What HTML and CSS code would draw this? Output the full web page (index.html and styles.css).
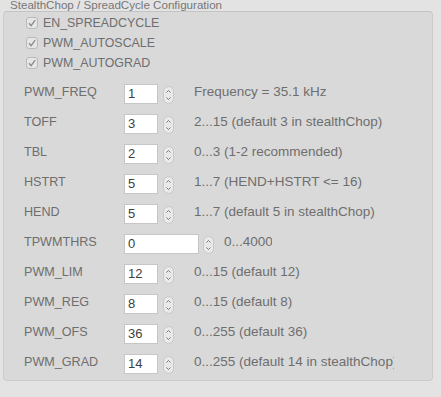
FILE: index.html
```html
<!DOCTYPE html><html>
<head>
  <meta http-equiv="Content-Type" content="text/html;charset=UTF-8">
  <title>StealthChop / SpreadCycle Configuration</title>
  <link rel="stylesheet" href="styles.css">
</head>
<body>
  <div class="title">StealthChop / SpreadCycle Configuration</div>
  <div class="group">
    <div class="checks">
      <label class="check"><span class="box"><svg width="10" height="10" viewBox="0 0 10 10"><path d="M2 5.2 L4.1 7.6 L8.2 2.2" fill="none" stroke="#8a8a8a" stroke-width="1.3"/></svg></span>EN_SPREADCYCLE</label>
      <label class="check"><span class="box"><svg width="10" height="10" viewBox="0 0 10 10"><path d="M2 5.2 L4.1 7.6 L8.2 2.2" fill="none" stroke="#8a8a8a" stroke-width="1.3"/></svg></span>PWM_AUTOSCALE</label>
      <label class="check"><span class="box"><svg width="10" height="10" viewBox="0 0 10 10"><path d="M2 5.2 L4.1 7.6 L8.2 2.2" fill="none" stroke="#8a8a8a" stroke-width="1.3"/></svg></span>PWM_AUTOGRAD</label>
    </div>
    <div class="rows">
      <div class="row"><span class="name">PWM_FREQ</span><span class="field">1</span><span class="stepper"><svg width="11" height="18" viewBox="0 0 11 18"><path d="M3.5 6.5 L5.5 4.5 L7.5 6.5 M3.5 11.5 L5.5 13.5 L7.5 11.5" fill="none" stroke="#7a7a7a" stroke-width="1"/></svg></span><span class="hint">Frequency = 35.1 kHz</span></div>
      <div class="row"><span class="name">TOFF</span><span class="field">3</span><span class="stepper"><svg width="11" height="18" viewBox="0 0 11 18"><path d="M3.5 6.5 L5.5 4.5 L7.5 6.5 M3.5 11.5 L5.5 13.5 L7.5 11.5" fill="none" stroke="#7a7a7a" stroke-width="1"/></svg></span><span class="hint">2...15 (default 3 in stealthChop)</span></div>
      <div class="row"><span class="name">TBL</span><span class="field">2</span><span class="stepper"><svg width="11" height="18" viewBox="0 0 11 18"><path d="M3.5 6.5 L5.5 4.5 L7.5 6.5 M3.5 11.5 L5.5 13.5 L7.5 11.5" fill="none" stroke="#7a7a7a" stroke-width="1"/></svg></span><span class="hint">0...3 (1-2 recommended)</span></div>
      <div class="row"><span class="name">HSTRT</span><span class="field">5</span><span class="stepper"><svg width="11" height="18" viewBox="0 0 11 18"><path d="M3.5 6.5 L5.5 4.5 L7.5 6.5 M3.5 11.5 L5.5 13.5 L7.5 11.5" fill="none" stroke="#7a7a7a" stroke-width="1"/></svg></span><span class="hint">1...7 (HEND+HSTRT &lt;= 16)</span></div>
      <div class="row"><span class="name">HEND</span><span class="field">5</span><span class="stepper"><svg width="11" height="18" viewBox="0 0 11 18"><path d="M3.5 6.5 L5.5 4.5 L7.5 6.5 M3.5 11.5 L5.5 13.5 L7.5 11.5" fill="none" stroke="#7a7a7a" stroke-width="1"/></svg></span><span class="hint">1...7 (default 5 in stealthChop)</span></div>
      <div class="row wide"><span class="name">TPWMTHRS</span><span class="field">0</span><span class="stepper"><svg width="11" height="18" viewBox="0 0 11 18"><path d="M3.5 6.5 L5.5 4.5 L7.5 6.5 M3.5 11.5 L5.5 13.5 L7.5 11.5" fill="none" stroke="#7a7a7a" stroke-width="1"/></svg></span><span class="hint">0...4000</span></div>
      <div class="row"><span class="name">PWM_LIM</span><span class="field">12</span><span class="stepper"><svg width="11" height="18" viewBox="0 0 11 18"><path d="M3.5 6.5 L5.5 4.5 L7.5 6.5 M3.5 11.5 L5.5 13.5 L7.5 11.5" fill="none" stroke="#7a7a7a" stroke-width="1"/></svg></span><span class="hint">0...15 (default 12)</span></div>
      <div class="row"><span class="name">PWM_REG</span><span class="field">8</span><span class="stepper"><svg width="11" height="18" viewBox="0 0 11 18"><path d="M3.5 6.5 L5.5 4.5 L7.5 6.5 M3.5 11.5 L5.5 13.5 L7.5 11.5" fill="none" stroke="#7a7a7a" stroke-width="1"/></svg></span><span class="hint">0...15 (default 8)</span></div>
      <div class="row"><span class="name">PWM_OFS</span><span class="field">36</span><span class="stepper"><svg width="11" height="18" viewBox="0 0 11 18"><path d="M3.5 6.5 L5.5 4.5 L7.5 6.5 M3.5 11.5 L5.5 13.5 L7.5 11.5" fill="none" stroke="#7a7a7a" stroke-width="1"/></svg></span><span class="hint">0...255 (default 36)</span></div>
      <div class="row"><span class="name">PWM_GRAD</span><span class="field">14</span><span class="stepper"><svg width="11" height="18" viewBox="0 0 11 18"><path d="M3.5 6.5 L5.5 4.5 L7.5 6.5 M3.5 11.5 L5.5 13.5 L7.5 11.5" fill="none" stroke="#7a7a7a" stroke-width="1"/></svg></span><span class="hint">0...255 (default 14 in stealthChop)</span></div>
    </div>
  </div>
</body></html>
```
FILE: styles.css
```css
html,body {height: 100%}
html {background: #e3e3e3;} body {margin: 0;font-family: "Liberation Sans",Helvetica,Arial,sans-serif;color: #6e6e6e;font-size: 13px;}

.title {height: 11px;line-height: 10px;font-size: 11.6px;padding-left: 10px;color: #777;white-space: nowrap;}

.group {margin: 0 8px 0 3px;height: 370px;box-sizing: border-box;background: #d9d9d9;border: 1px solid #cbcbcb;border-top-color: #c4c4c4;border-radius: 4px;}

.checks {padding-left: 22px;display: flex;flex-direction: column;}
.check {height: 20px;box-sizing: border-box;display: flex;align-items: center;gap: 5px;line-height: 16px;padding-top: 1px;font-size: 12.4px;}
.check .box {width: 10px;height: 10px;border: 1px solid #b9b9b9;border-radius: 3px;background: #e6e6e6;display: flex;align-items: center;justify-content: center;}

.rows {padding: 12px 0 0 20px;display: flex;flex-direction: column;gap: 10px;}
.row {height: 20px;display: flex;align-items: flex-start;}
.name {width: 100px;line-height: 16px;font-size: 12.6px;}
.field {height: 18px;border: 1px solid #c6c6c6;background: #fff;color: #404040;line-height: 18px;padding-left: 3px;width: 29px;}
.wide .field {width: 70px;}
.stepper {width: 11px;height: 18px;margin: 2px 0 0 5px;box-sizing: border-box;border: 1px solid #c8c8c8;border-radius: 6px;background: #e9e9e9;display: flex;}
.stepper svg {margin: -1px;}
.hint {width: 200px;margin-left: 20px;line-height: 16px;font-size: 13.5px;white-space: nowrap;overflow: hidden;}
.wide .stepper {margin-left: 4px;}
.wide .hint {width: 48px;margin-left: 10px;}
```
